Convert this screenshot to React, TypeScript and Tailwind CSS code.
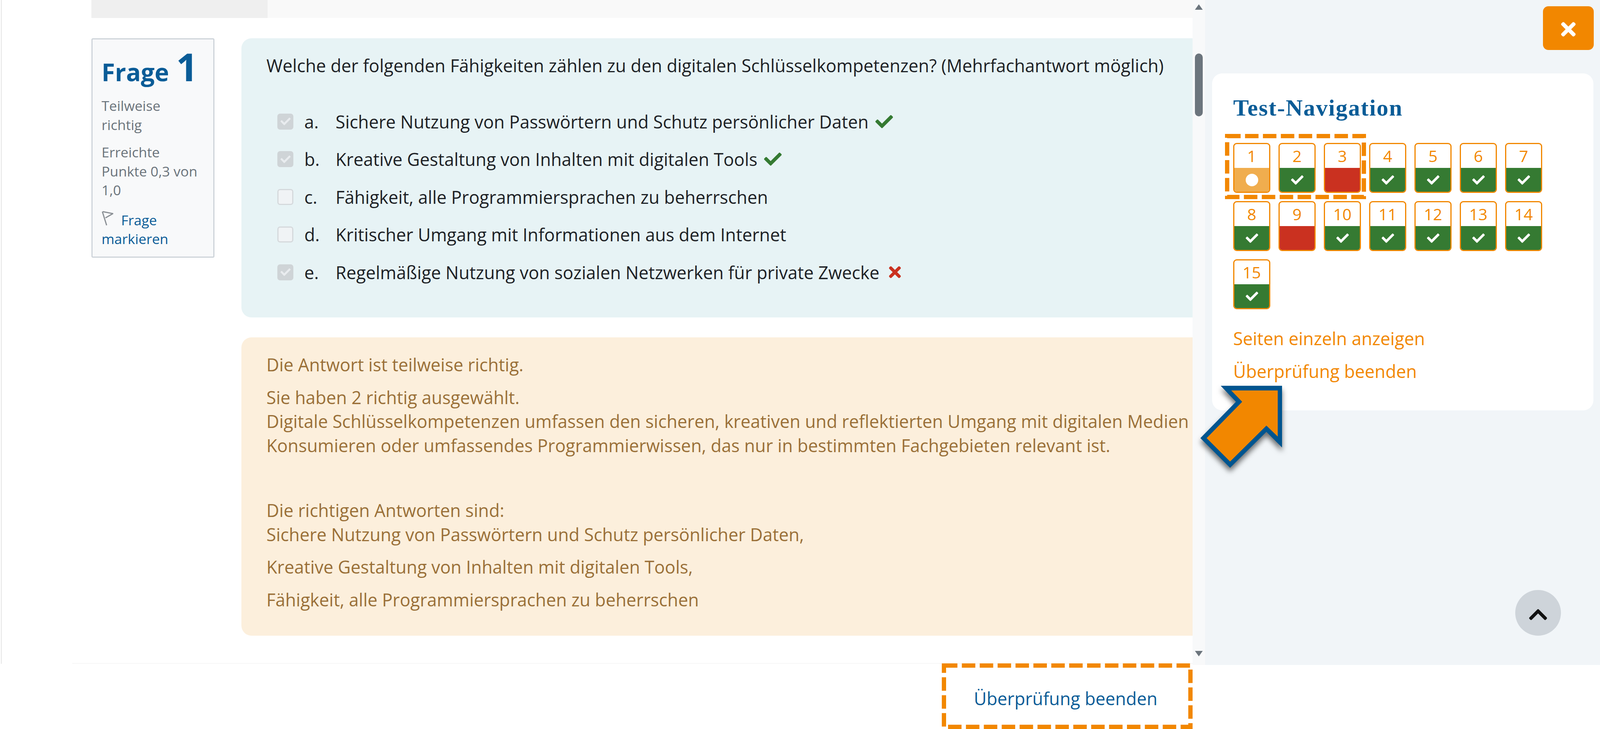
import { FaCheck, FaTimes, FaChevronUp } from "react-icons/fa";

const answers = [
  { letter: "a.", text: "Sichere Nutzung von Passwörtern und Schutz persönlicher Daten", checked: true, mark: "right" },
  { letter: "b.", text: "Kreative Gestaltung von Inhalten mit digitalen Tools", checked: true, mark: "right" },
  { letter: "c.", text: "Fähigkeit, alle Programmiersprachen zu beherrschen", checked: false, mark: "" },
  { letter: "d.", text: "Kritischer Umgang mit Informationen aus dem Internet", checked: false, mark: "" },
  { letter: "e.", text: "Regelmäßige Nutzung von sozialen Netzwerken für private Zwecke", checked: true, mark: "wrong" },
];

const questions = [
  { n: 1, state: "current" },
  { n: 2, state: "right" },
  { n: 3, state: "wrong" },
  { n: 4, state: "right" },
  { n: 5, state: "right" },
  { n: 6, state: "right" },
  { n: 7, state: "right" },
  { n: 8, state: "right" },
  { n: 9, state: "wrong" },
  { n: 10, state: "right" },
  { n: 11, state: "right" },
  { n: 12, state: "right" },
  { n: 13, state: "right" },
  { n: 14, state: "right" },
  { n: 15, state: "right" },
];

function QuestionBox({ n, state }: { n: number; state: string }) {
  return (
    <div className="flex h-[128px] w-[95px] flex-col overflow-hidden rounded-[9px] border-[3px] border-[#f28700] bg-white">
      <div className="flex h-[61px] items-center justify-center text-[41px] text-[#f28700]">{n}</div>
      {state === "current" && (
        <div className="flex flex-1 items-center justify-center bg-[#f0ad4e]">
          <div className="h-[32px] w-[32px] rounded-full bg-white" />
        </div>
      )}
      {state === "right" && (
        <div className="flex flex-1 items-center justify-center bg-[#357a32] text-white">
          <FaCheck className="h-[32px] w-[32px]" />
        </div>
      )}
      {state === "wrong" && <div className="flex-1 bg-[#ca3120]" />}
    </div>
  );
}

function DashedFrame({ className, w, h }: { className: string; w: number; h: number }) {
  return (
    <svg className={className} width={w} height={h} viewBox={`0 0 ${w} ${h}`}>
      <rect x={5.5} y={5.5} width={w - 11} height={h - 11} fill="none" stroke="#f28700" strokeWidth={11} strokeDasharray="34.5 11.3" />
    </svg>
  );
}

export default function App() {
  return (
    <div className="relative h-[1867px] w-full overflow-hidden bg-white font-['Open_Sans',sans-serif] text-[45px] leading-[61.5px] text-[#1d2125]">
      <div className="flex h-[1703px]">
        <div className="ml-[2px] h-[1700px] w-[3px] shrink-0 bg-[#ececec]" />
        <main className="h-full min-w-0 flex-1">
          <div className="h-[1698px] overflow-hidden pl-[229px]">
            <div className="flex h-[46px] bg-[#f9f9f9]">
              <div className="h-full w-[451px] bg-[#efefef]" />
            </div>
            <div className="mt-[52px] flex items-start gap-[69px]">
              <div className="h-[562px] w-[315px] shrink-0 rounded-[4px] border-[3px] border-[#ced4da] bg-[#f8f9fa] pt-[24px] pl-[23px] text-[35.5px] leading-[48.5px] text-[#6a737b]">
                <h3 className="flex items-baseline gap-[18px] leading-[90px] font-bold text-[#0a5c97]">
                  <span className="text-[62.5px]">Frage</span>
                  <span className="text-[98px] leading-[90px]">1</span>
                </h3>
                <div className="mt-[17px]">
                  Teilweise
                  <br />
                  richtig
                </div>
                <div className="mt-[22px]">
                  Erreichte
                  <br />
                  Punkte 0,3 von
                  <br />
                  1,0
                </div>
                <div className="mt-[28px]">
                  <svg className="mr-[20px] inline-block h-[40px] w-[30px] align-[-2px]" viewBox="0 0 30 40" fill="none" stroke="#8a8f94" strokeWidth="3">
                    <path d="M2 3 L13 38" />
                    <path d="M3 3 L29 8 L10 19" />
                  </svg>
                  <span className="text-[#0a5c97]">Frage</span>
                  <br />
                  <span className="text-[#0a5c97]">markieren</span>
                </div>
              </div>
              <div className="min-w-0 flex-1">
                <div className="h-[715px] rounded-l-[26px] bg-[#e7f3f5] pt-[39px] pl-[64px]">
                  <p className="whitespace-nowrap">
                    Welche der folgenden Fähigkeiten zählen zu den digitalen Schlüsselkompetenzen? (Mehrfachantwort möglich)
                  </p>
                  <div className="mt-[82px] flex flex-col gap-[35px] pl-[28px]">
                    {answers.map((a) => (
                      <div key={a.letter} className="flex h-[61.5px] items-center whitespace-nowrap">
                        {a.checked ? (
                          <div className="flex h-[41px] w-[41px] shrink-0 items-center justify-center rounded-[7px] bg-[#cfd4d7] text-[#e9ecef]">
                            <FaCheck className="h-[26px] w-[26px]" />
                          </div>
                        ) : (
                          <div className="h-[41px] w-[41px] shrink-0 rounded-[7px] border-[3px] border-[#d5d9dc] bg-[#f0f3f5]" />
                        )}
                        <span className="ml-[28px] w-[80px]">{a.letter}</span>
                        <span>{a.text}</span>
                        {a.mark === "right" && <FaCheck className="ml-[17px] h-[45px] w-[45px] text-[#357a32]" />}
                        {a.mark === "wrong" && <FaTimes className="ml-[22px] h-[44px] w-[36px] text-[#ca3120]" />}
                      </div>
                    ))}
                  </div>
                </div>
                <div className="mt-[51px] h-[764px] overflow-hidden whitespace-nowrap rounded-l-[26px] bg-[#fcefdc] pt-[39px] pl-[64px] text-[#9a7038]">
                  <p>Die Antwort ist teilweise richtig.</p>
                  <p className="mt-[22px]">Sie haben 2 richtig ausgewählt.</p>
                  <p>Digitale Schlüsselkompetenzen umfassen den sicheren, kreativen und reflektierten Umgang mit digitalen Medien und Technologien</p>
                  <p>Konsumieren oder umfassendes Programmierwissen, das nur in bestimmten Fachgebieten relevant ist.</p>
                  <p className="mt-[105px]">Die richtigen Antworten sind:</p>
                  <p>Sichere Nutzung von Passwörtern und Schutz persönlicher Daten,</p>
                  <p className="mt-[22px]">Kreative Gestaltung von Inhalten mit digitalen Tools,</p>
                  <p className="mt-[22px]">Fähigkeit, alle Programmiersprachen zu beherrschen</p>
                </div>
              </div>
            </div>
          </div>
          <div className="ml-[180px] h-[2px] bg-[#f6f6f6]" />
        </main>
        <div className="relative h-full w-[32px] shrink-0 bg-[#f8f9fa]">
          <div className="absolute top-[11px] left-[6px] h-0 w-0 border-x-[10px] border-b-[14px] border-x-transparent border-b-[#6c757d]" />
          <div className="absolute top-[137px] left-[6px] h-[161px] w-[20px] rounded-[10px] bg-[#6c757d]" />
          <div className="absolute top-[1667px] left-[6px] h-0 w-0 border-x-[10px] border-t-[14px] border-x-transparent border-t-[#6c757d]" />
        </div>
        <aside className="relative h-full w-[1011px] shrink-0 bg-[#f1f5f8] pl-[18px]">
          <div className="mt-[16px] mr-[16px] ml-auto flex h-[112px] w-[130px] items-center justify-center rounded-[14px] bg-[#f28700] pt-[5px] text-white">
            <FaTimes className="h-[54px] w-[38px]" />
          </div>
          <div className="mt-[60px] h-[863px] w-[976px] rounded-[26px] bg-white pt-[50px] pl-[54px]">
            <h2 className="font-['Liberation_Serif',serif] text-[60px] leading-[76px] font-bold tracking-[2px] text-[#0a5c97]">Test-Navigation</h2>
            <div className="mt-[52px] grid w-[791px] grid-cols-7 gap-x-[21px] gap-y-[21px]">
              {questions.map((q) => (
                <QuestionBox key={q.n} n={q.n} state={q.state} />
              ))}
            </div>
            <div className="mt-[44px] text-[#f28700]">Seiten einzeln anzeigen</div>
            <div className="mt-[22px] text-[#f28700]">Überprüfung beenden</div>
          </div>
          <div className="absolute top-[1511px] left-[794px] flex h-[117px] w-[117px] items-center justify-center rounded-full bg-[#ced4da] pt-[8px] text-[#111111]">
            <FaChevronUp className="h-[54px] w-[47px]" />
          </div>
        </aside>
      </div>
      <div className="flex justify-end pt-[55px] pr-[1133px] text-[#0a5c97]">Überprüfung beenden</div>
      <DashedFrame className="absolute top-[1699px] right-[1043px]" w={642} h={168} />
      <DashedFrame className="absolute top-[343px] right-[599px]" w={361} h={167} />
      <svg className="absolute top-[970px] right-[795px] drop-shadow-[0_10px_7px_rgba(0,0,0,0.55)]" width="240" height="240" viewBox="3240 970 240 240">
        <polygon points="3304,988 3461,988 3461,1146 3421,1106 3328,1198 3252,1122 3343,1029" fill="#00558f" />
        <polygon points="3331,1000 3450,1000 3450,1118 3421,1090 3328,1182 3268,1122 3359,1029" fill="#f28700" />
      </svg>
    </div>
  );
}
